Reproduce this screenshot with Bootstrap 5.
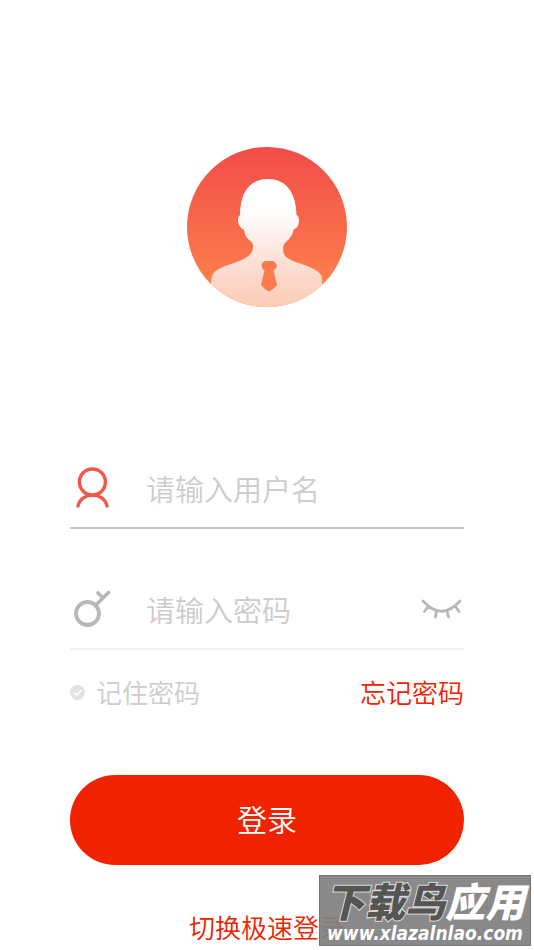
<!DOCTYPE html>
<html lang="zh-CN">
<head>
<meta charset="utf-8">
<meta name="viewport" content="width=device-width, initial-scale=1">
<title>登录</title>
<link rel="stylesheet" href="https://cdn.jsdelivr.net/npm/bootstrap@5.3.0/dist/css/bootstrap.min.css">
<style>
body { font-family: "Noto Sans CJK SC", sans-serif; font-weight: 350; background: #fff; }
.login-page { padding: 147px 70px 0; min-height: 100vh; }
.avatar { width: 160px; height: 160px; margin-bottom: 141px; }
.field { height: 81px; border-bottom: 2px solid #c4c4c4; }
.field-pass { margin-top: 40px; border-bottom-color: #f2f2f2; }
.field-icon { width: 44px; height: 44px; margin-right: 32px; }
.field input { font-size: 29px; font-weight: 350; line-height: 40px; min-width: 0; color: #555; }
.field input::placeholder { color: #ccc; opacity: 1; }
.field input:focus { box-shadow: none; }
.eye { width: 44px; height: 44px; }
.options { margin-top: 23px; font-size: 26px; line-height: 38px; color: #ccc; }
.options input { appearance: none; width: 15px; height: 15px; border-radius: 50%; margin: 0 11px 0 0;
  background: #e2e2e2 url("data:image/svg+xml,%3Csvg xmlns='http://www.w3.org/2000/svg' viewBox='0 0 15 15'%3E%3Cpath d='M4 7.5l2.600 2.600L11.200 5.200' fill='none' stroke='%23fff' stroke-width='1.600'/%3E%3C/svg%3E") center / 15px; }
.accent, .accent:hover { color: #f02200; }
.btn-login, .btn-login:hover, .btn-login:active { background: #f02200 !important; color: #fff !important; border: 0; }
.btn-login { height: 90px; margin-top: 64px; font-size: 30px; font-weight: 350; line-height: 40px; padding: 0 0 4px; }
.switch { margin-top: 43px; font-size: 26px; line-height: 38px; }
.stamp { right: 3px; bottom: 4px; width: 212px; height: 71px; background: rgba(128, 128, 128, .93);
  border: 1px solid #777; color: #fff; white-space: nowrap; }
.stamp-title { font-size: 40px; line-height: 48px; font-weight: 900; font-style: italic; }
.stamp-dark { color: #555; -webkit-text-stroke: 2px #ddd; paint-order: stroke fill; }
.stamp-url { font-family: "DejaVu Sans Condensed", "DejaVu Sans", sans-serif; font-weight: 700; font-style: italic; font-size: 19px; line-height: 19px; }
</style>
<script src="https://cdn.jsdelivr.net/npm/bootstrap@5.3.0/dist/js/bootstrap.bundle.min.js"></script>
</head>
<body>
<main class="login-page position-relative overflow-hidden">
  <form class="d-flex flex-column">
    <svg class="avatar align-self-center flex-shrink-0" viewBox="0 0 160 160" role="img" aria-label="头像">
      <defs>
        <linearGradient id="disc" x1="0" y1="0" x2="0" y2="1"><stop offset="0" stop-color="#f24c48"/><stop offset=".8" stop-color="#fc7b4c"/><stop offset="1" stop-color="#ff854d"/></linearGradient>
        <linearGradient id="person" gradientUnits="userSpaceOnUse" x1="0" y1="32" x2="0" y2="160"><stop offset=".25" stop-color="#fff"/><stop offset=".7" stop-color="#fbdcd2"/><stop offset="1" stop-color="#fdcbb5"/></linearGradient>
        <clipPath id="round"><circle cx="80" cy="80" r="80"/></clipPath>
      </defs>
      <circle cx="80" cy="80" r="80" fill="url(#disc)"/>
      <g clip-path="url(#round)">
        <path fill="url(#person)" d="M81 32C99 32 109 45 109.500 68Q112 69 112 74C112 79 109 82 107 82Q105 90 100 94Q96 97 96 102C96 109 101 112 106 114C120 119 135 123 135 132L136 160H24V137C24 128 26 124 36 120C48 115 66 112 66 100Q67 96 61 92Q58 89 57 83Q54 82 52 78C50 73 51 70 53 68C53 45 63 32 81 32Z"/>
        <path fill="#fc7b4c" d="M78 114H86Q89 115 90 119Q89 122 86.500 123.500L90 138Q87 142 82 144.500Q77 142 74 138L77.500 123.500Q75 122 74.500 119Q75 115 78 114Z"/>
      </g>
    </svg>
    <div class="field d-flex align-items-center">
      <svg class="field-icon flex-shrink-0" viewBox="0 0 44 44" fill="none" stroke="#f5564a" stroke-width="3.400" stroke-linecap="round" aria-hidden="true"><circle cx="22.400" cy="16" r="13"/><path d="M8 40C11 25.500 34 25.500 37 40"/></svg>
      <input class="form-control border-0 rounded-0 bg-transparent p-0" type="text" placeholder="请输入用户名" aria-label="用户名">
    </div>
    <div class="field field-pass d-flex align-items-center">
      <svg class="field-icon flex-shrink-0" viewBox="0 0 44 44" fill="none" stroke="#b8b8b8" stroke-width="3.800" stroke-linecap="round" aria-hidden="true"><circle cx="17.500" cy="26.500" r="11.500"/><path d="M26 18L38.500 5.500M28 6L33 11"/></svg>
      <input class="form-control border-0 rounded-0 bg-transparent p-0" type="password" placeholder="请输入密码" aria-label="密码">
      <button class="btn eye border-0 p-0 flex-shrink-0" type="button" aria-label="显示密码">
        <svg class="d-block" width="44" height="44" viewBox="0 0 44 44" fill="none" stroke="#b8b8b8" stroke-width="2.800" stroke-linecap="round"><path d="M3 14Q21.500 34.500 40 14M8.500 19L4.500 24.500M16.500 24L15.500 30M27 24L28.500 30M35 19L39 24.500"/></svg>
      </button>
    </div>
    <div class="options d-flex justify-content-between">
      <label class="d-flex align-items-center"><input type="checkbox">记住密码</label>
      <a class="accent text-decoration-none" href="#">忘记密码</a>
    </div>
    <button class="btn btn-login rounded-pill" type="submit">登录</button>
    <a class="switch accent text-decoration-none align-self-center" href="#">切换极速登录</a>
  </form>
  <div class="stamp position-absolute text-center">
    <div class="stamp-title"><span class="stamp-dark">下载鸟</span>应用</div>
    <div class="stamp-url">www.xlazalnlao.com</div>
  </div>
</main>
</body>
</html>
